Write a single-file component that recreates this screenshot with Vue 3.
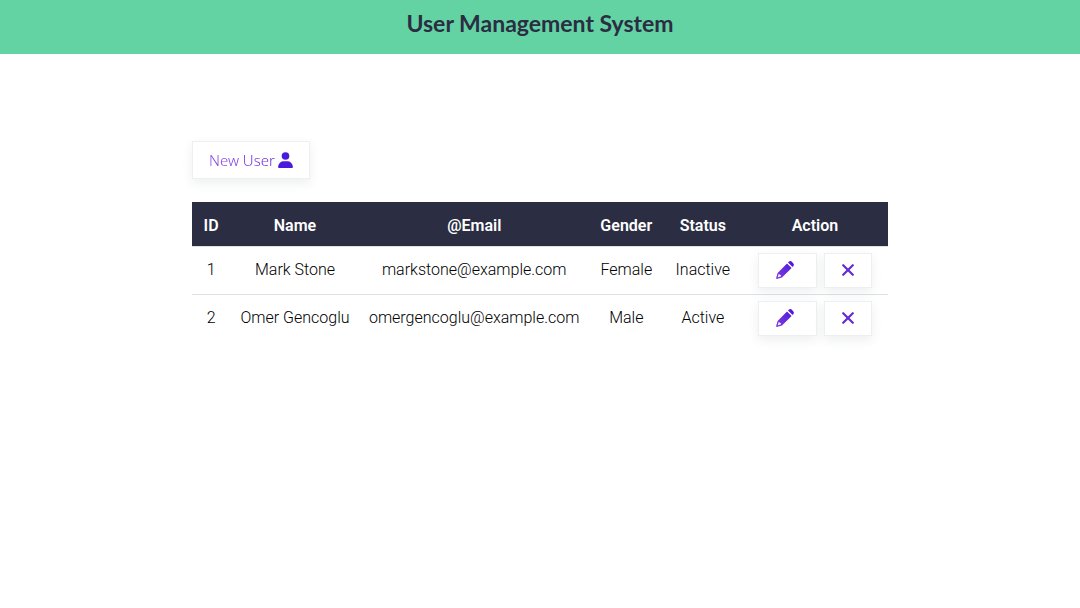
<script setup>
const users = [
  { id: 1, name: 'Mark Stone', email: 'markstone@example.com', gender: 'Female', status: 'Inactive' },
  { id: 2, name: 'Omer Gencoglu', email: 'omergencoglu@example.com', gender: 'Male', status: 'Active' },
]
</script>

<template>
  <header class="header">
    <h1>User Management System</h1>
  </header>
  <main class="container">
    <a class="button new-user" href="#new">
      <span class="gradient-text">New User</span>
      <svg width="15" height="16" viewBox="0 0 480 512" aria-hidden="true">
        <circle cx="240" cy="126" r="122" fill="#4a1bdc" />
        <path d="M38 512C14 512 0 494 4 464C19 362 90 296 178 296H302C390 296 461 362 476 464C480 494 466 512 442 512Z" fill="#4a1bdc" />
      </svg>
    </a>
    <table>
      <colgroup>
        <col class="c-id" /><col class="c-name" /><col class="c-email" />
        <col class="c-gender" /><col class="c-status" /><col class="c-action" />
      </colgroup>
      <thead>
        <tr>
          <th>ID</th>
          <th>Name</th>
          <th>@Email</th>
          <th>Gender</th>
          <th>Status</th>
          <th>Action</th>
        </tr>
      </thead>
      <tbody>
        <tr v-for="user in users" :key="user.id">
          <td>{{ user.id }}</td>
          <td>{{ user.name }}</td>
          <td>{{ user.email }}</td>
          <td>{{ user.gender }}</td>
          <td>{{ user.status }}</td>
          <td>
            <div class="actions">
              <a class="button edit" href="#edit" :aria-label="`Edit ${user.name}`">
                <svg width="18" height="18" viewBox="0 0 18 18" aria-hidden="true">
                  <defs>
                    <linearGradient :id="`pen-${user.id}`" gradientUnits="userSpaceOnUse" x1="0" y1="18" x2="18" y2="0">
                      <stop offset="0" stop-color="#8540df" />
                      <stop offset="1" stop-color="#4515dc" />
                    </linearGradient>
                  </defs>
                  <g :fill="`url(#pen-${user.id})`">
                    <path fill-rule="evenodd" d="M11 2.4L15.6 7L6 16.4L0.9 17.9Q0 18 0.1 17.1L1.6 12ZM2.7 13L1.8 16.2L5 15.3L4.7 13.9L3.5 13.9L3.5 13Z" />
                    <path d="M12 1.5L13 0.6Q14.3-0.4 15.6 0.6L17.4 2.4Q18.4 3.7 17.4 5L16.5 6Z" />
                  </g>
                </svg>
              </a>
              <button class="button remove" type="button" :aria-label="`Delete ${user.name}`">
                <svg width="12" height="12" viewBox="0 0 12 12" aria-hidden="true">
                  <path d="M1.2 1.2L10.8 10.8M10.8 1.2L1.2 10.8" fill="none" stroke="#6128d9" stroke-width="2.1" stroke-linecap="round" />
                </svg>
              </button>
            </div>
          </td>
        </tr>
      </tbody>
    </table>
  </main>
</template>

<style>
body {
  background: #fff;
}
</style>

<style scoped>
* {
  box-sizing: border-box;
}

.header {
  height: 54px;
  padding-top: 8px;
  background: #64d3a4;
  text-align: center;
}

h1 {
  margin: 0;
  color: #2b2d42;
  font: 700 23px/30px Lato, "Noto Sans", sans-serif;
}

.container {
  max-width: 720px;
  margin: 87px auto 0;
  padding: 0 12px 24px;
}

.button {
  display: inline-flex;
  align-items: center;
  justify-content: center;
  border: 1px solid #edf0f3;
  background: #fff;
  box-shadow: 0 4px 10px rgba(43, 45, 66, 0.08);
  text-decoration: none;
  cursor: pointer;
}

.new-user {
  height: 38px;
  padding: 0 16px;
  gap: 3px;
  font: 300 15px/24px "Noto Sans", "Open Sans", sans-serif;
}

.gradient-text {
  background: linear-gradient(90deg, #8a48e3, #6422de);
  background-clip: text;
  color: transparent;
}

table {
  width: 100%;
  margin-top: 23px;
  border-collapse: collapse;
  table-layout: fixed;
  color: #000;
  font: 300 16px/24px Roboto, sans-serif;
  text-align: center;
}

.c-id { width: 5.5%; }
.c-name { width: 18.6%; }
.c-email { width: 32.9%; }
.c-gender { width: 10.8%; }
.c-status { width: 11.2%; }
.c-action { width: 21%; }

th,
td {
  padding: 0;
  white-space: nowrap;
}

th {
  height: 44px;
  padding-top: 5px;
  background: #2b2d42;
  color: #fff;
  font-weight: 600;
}

td {
  height: 48px;
  border-top: 1px solid #dee2e6;
}

.actions {
  display: flex;
  justify-content: center;
  gap: 7px;
}

.edit,
.remove {
  height: 35px;
  padding: 0;
}

.edit {
  width: 59px;
  padding-right: 4px;
}

.remove {
  width: 48px;
}
</style>
